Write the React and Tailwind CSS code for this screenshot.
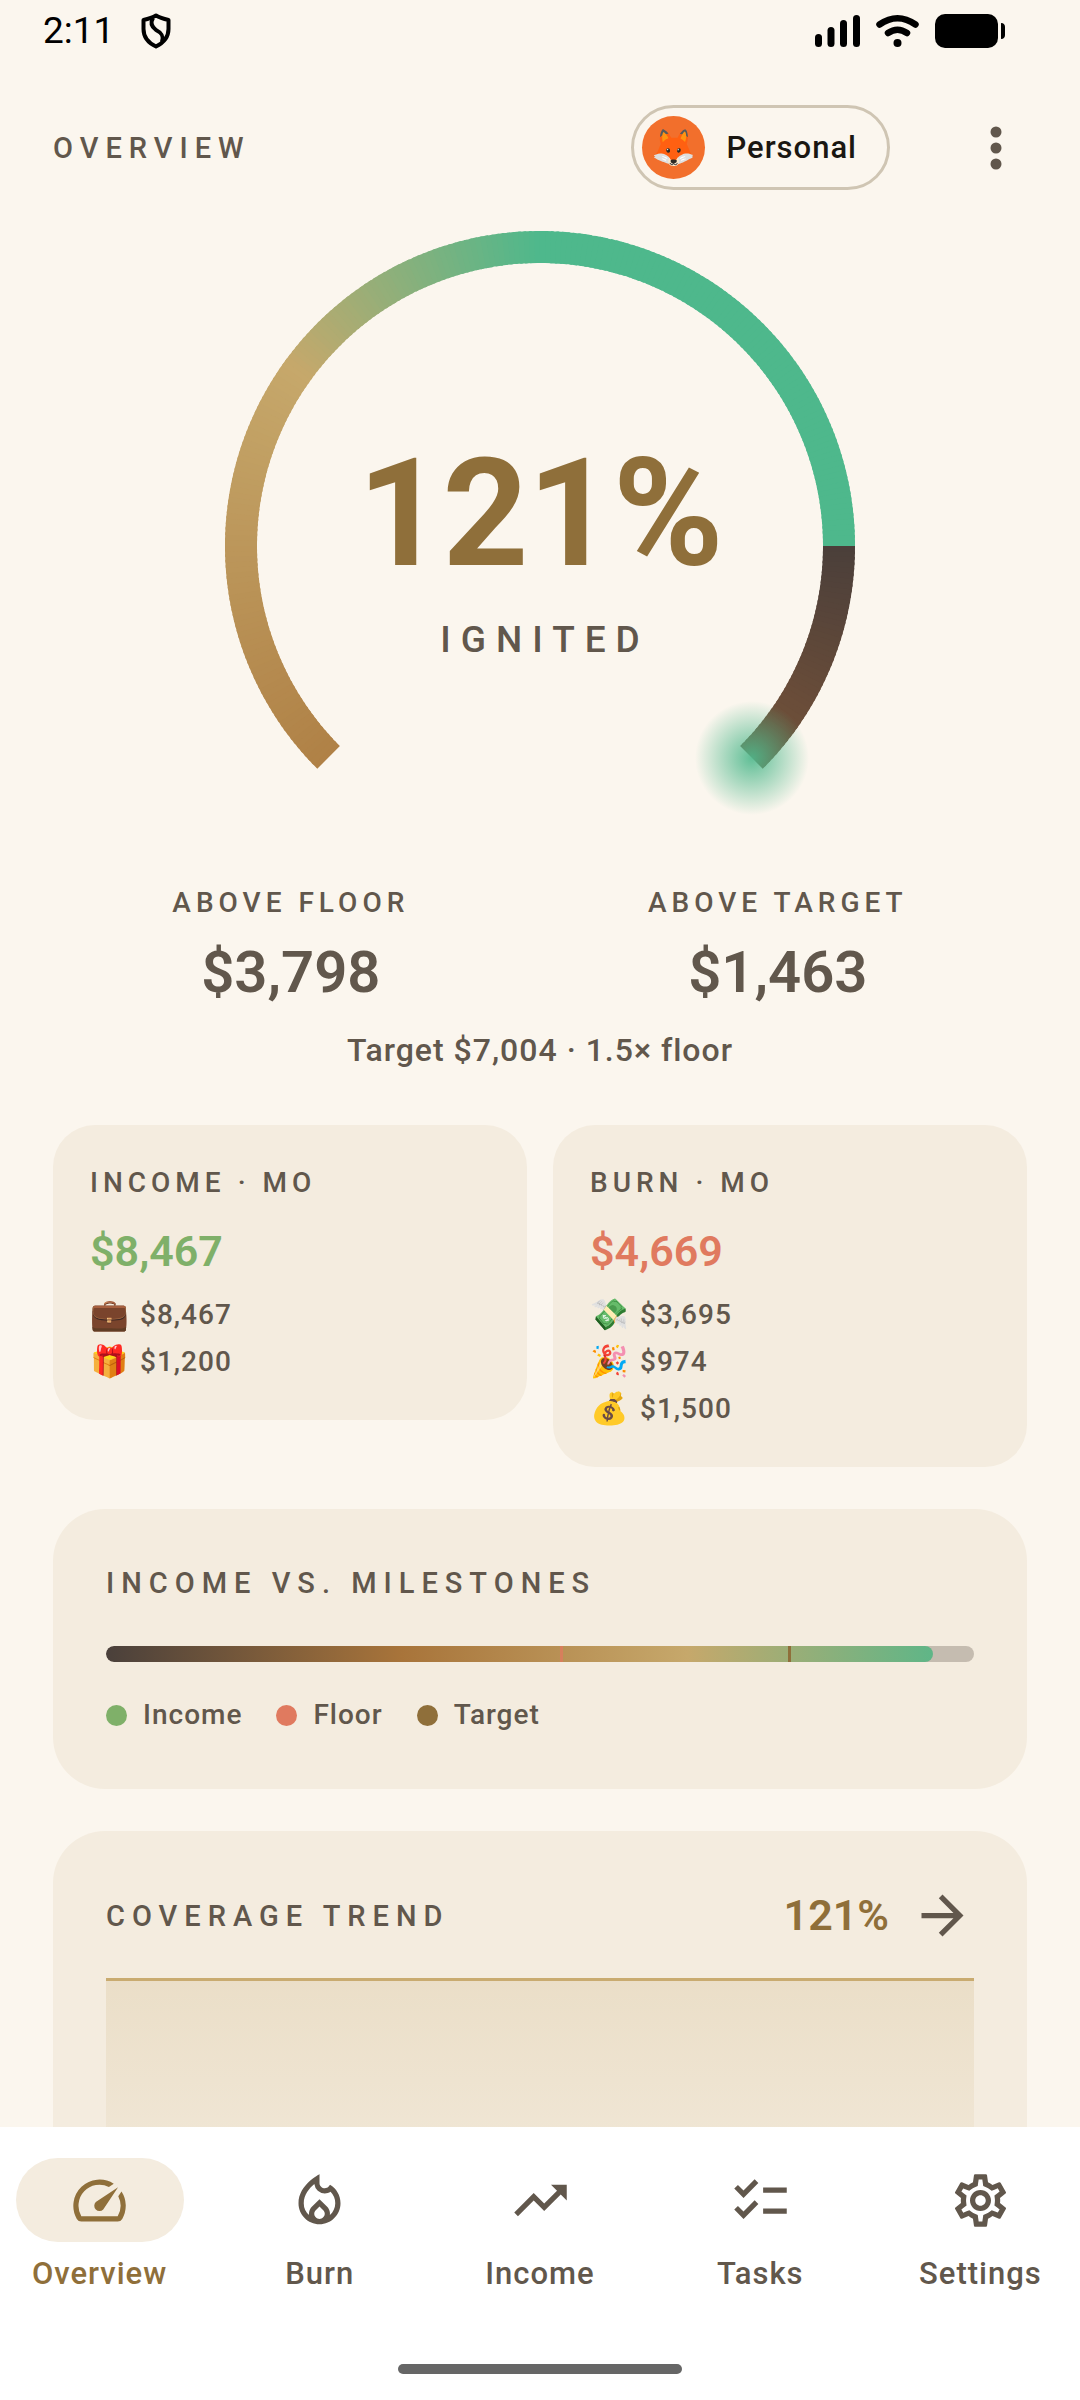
import React from "react";
import {
  MdArrowForward,
  MdChecklist,
  MdOutlineLocalFireDepartment,
  MdOutlineSettings,
  MdOutlineSpeed,
  MdTrendingUp,
} from "react-icons/md";

// --- Data -------------------------------------------------------------------
const TABS = [
  { id: "overview", label: "Overview", Icon: MdOutlineSpeed },
  { id: "burn", label: "Burn", Icon: MdOutlineLocalFireDepartment },
  { id: "income", label: "Income", Icon: MdTrendingUp },
  { id: "tasks", label: "Tasks", Icon: MdChecklist },
  { id: "settings", label: "Settings", Icon: MdOutlineSettings },
];

const income = 8467;
const floor = 4669;
const target = 7004;
const scaleMax = 8890;

const pct = v => `${(v / scaleMax) * 100}%`;

// --- Gauge ------------------------------------------------------------------
// angles run clockwise from 3 o'clock
const STOPS = [
  [0, [74, 63, 58]],
  [32, [106, 77, 57]],
  [108, [168, 116, 58]],
  [216, [198, 168, 107]],
  [270, [78, 184, 140]],
  [360, [78, 184, 140]],
];

function sweepColor(deg) {
  const a = deg % 360;
  const i = STOPS.findIndex(([d], k) => a >= d && a < STOPS[k + 1][0]);
  const [d0, c0] = STOPS[i];
  const [d1, c1] = STOPS[i + 1];
  const t = (a - d0) / (d1 - d0);
  return `rgb(${c0.map((c, k) => Math.round(c + (c1[k] - c) * t)).join(",")})`;
}

function arc(from, to, r) {
  const p = d => {
    const a = (d * Math.PI) / 180;
    return `${(315 + r * Math.cos(a)).toFixed(2)} ${(315 + r * Math.sin(a)).toFixed(2)}`;
  };
  return `M${p(from)}A${r} ${r} 0 0 1 ${p(to)}`;
}

function Gauge() {
  const slices = [];
  for (let d = 135; d < 405; d++) {
    const end = d === 359 || d === 404 ? d + 1 : d + 1.5;
    slices.push(<path key={d} d={arc(d, end, 299)} stroke={sweepColor(d + 0.5)} />);
  }
  return (
    <div className="relative mx-auto mt-[41px] size-[630px]">
      <svg viewBox="0 0 630 630" className="size-full overflow-visible" aria-hidden="true">
        <defs>
          <radialGradient id="glow">
            <stop offset="0" stopColor="#4eb88c" stopOpacity="0.9" />
            <stop offset="1" stopColor="#4eb88c" stopOpacity="0" />
          </radialGradient>
        </defs>
        <g fill="none" strokeWidth="32">{slices}</g>
        <circle cx="527" cy="527" r="57" fill="url(#glow)" />
      </svg>
      <div className="absolute inset-0 flex flex-col items-center justify-center gap-4 pt-1">
        <div className="text-[150px] leading-[168px] font-bold tracking-[-1px] text-[#8f6f3a]">121%</div>
        <div className="pl-[10px] text-[37px] leading-[52px] font-medium tracking-[10px]">IGNITED</div>
      </div>
    </div>
  );
}

// --- Bars -------------------------------------------------------------------
function StatusBar() {
  return (
    <div className="flex h-[62px] items-center pr-[75px] pl-[43px] text-black">
      <span className="text-[37px] leading-[42px]">2:11</span>
      <svg viewBox="0 0 30 36" className="ml-[27px] h-9 w-[30px]" fill="none" stroke="currentColor" strokeWidth="4" strokeLinejoin="round">
        <path d="M15 2.5C11 5 7 6 2.5 7v9c0 8 5 14 12.500 17.500C22 30 27.500 24 27.500 16V7C23 6 19 5 15 2.500Z" />
        <path d="M12 5c-3 5-1 9 3 12 6 3 8 6 6 12" />
      </svg>
      <div className="ml-auto flex items-center gap-4">
        <svg viewBox="0 0 45 34" className="h-[34px] w-[45px]" fill="currentColor">
          <rect x="0" y="20" width="7" height="13" rx="3.5" />
          <rect x="12.500" y="13" width="7" height="20" rx="3.5" />
          <rect x="25" y="6" width="7" height="27" rx="3.500" />
          <rect x="38" y="1" width="7" height="32" rx="3.500" />
        </svg>
        <svg viewBox="0 0 43 34" className="h-[34px] w-[43px]" fill="none" stroke="currentColor" strokeWidth="6.500" strokeLinecap="round">
          <path d="M3.500 10.500Q21.500-2 39.500 10.500M12 19Q21.500 12.500 31 19" />
          <circle cx="21.500" cy="29" r="4" fill="currentColor" stroke="none" />
        </svg>
        <svg viewBox="0 0 70 34" className="h-[34px] w-[70px]" fill="currentColor">
          <rect width="63" height="34" rx="10" />
          <path d="M66 9c3 0 4 2 4 4v8c0 2-1 4-4 4z" />
        </svg>
      </div>
    </div>
  );
}

function Header() {
  return (
    <header className="mt-[43px] flex h-[85px] items-center pr-[42px] pl-[53px]">
      <h1 className="mr-auto text-[29px] leading-[42px] font-medium tracking-[7px]">OVERVIEW</h1>
      <button className="flex h-[85px] items-center gap-[21px] rounded-full border-3 border-[#cfc5b3] pr-[30px] pl-2 text-[#1a1712]">
        <span className="flex size-[63px] items-center justify-center rounded-full bg-[#f26f2c] text-[36px] leading-none">🦊</span>
        <span className="text-[31px] leading-[42px] font-medium tracking-[1px]">Personal</span>
      </button>
      <button aria-label="More options" className="ml-[64px] flex h-[84px] w-[84px] items-center justify-center">
        <svg viewBox="0 0 12 44" className="h-11 w-3" fill="currentColor">
          <circle cx="6" cy="6" r="5.500" />
          <circle cx="6" cy="22" r="5.500" />
          <circle cx="6" cy="38" r="5.500" />
        </svg>
      </button>
    </header>
  );
}

function BottomNav() {
  return (
    <nav className="shrink-0 bg-white pt-[31px]">
      <div className="flex gap-[21px]">
        {TABS.map(({ id, label, Icon }) => {
          const active = id === "overview";
          return (
            <button
              key={id}
              aria-current={active ? "page" : undefined}
              className={active ? "flex flex-1 flex-col items-center gap-[11px] text-[#8f6f3a]" : "flex flex-1 flex-col items-center gap-[11px]"}
            >
              <span className={active ? "flex h-[84px] w-[168px] items-center justify-center rounded-full bg-[#f4ecdf]" : "flex h-[84px] w-[168px] items-center justify-center"}>
                <Icon className="size-[63px]" />
              </span>
              <span className="text-[31px] leading-[42px] font-medium tracking-[1px]">{label}</span>
            </button>
          );
        })}
      </div>
      <div className="mx-auto mt-[69px] mb-[26px] h-[10px] w-[284px] rounded-full bg-[#666]" />
    </nav>
  );
}

// --- Cards ------------------------------------------------------------------
function Stat({ label, value }) {
  return (
    <div className="flex flex-col items-center gap-3">
      <div className="text-[28px] leading-[42px] font-medium tracking-[5px]">{label}</div>
      <div className="text-[58px] leading-[72px] font-semibold">{value}</div>
    </div>
  );
}

function FlowCard({ label, total, totalClass, rows }) {
  return (
    <section className="rounded-[42px] bg-[#f4ecdf] p-[37px]">
      <h2 className="text-[28px] leading-[42px] font-medium tracking-[5px]">{label}</h2>
      <div className={totalClass}>{total}</div>
      <ul className="flex flex-col gap-[5px]">
        {rows.map(([icon, amount]) => (
          <li key={amount} className="flex items-center gap-[13px] text-[28px] leading-[42px] font-medium tracking-[1px]">
            <span className="w-[37px] text-[31px]">{icon}</span>
            {amount}
          </li>
        ))}
      </ul>
    </section>
  );
}

function Legend({ dotClass, label }) {
  return (
    <li className="flex items-center gap-4">
      <span className={dotClass} />
      <span className="text-[28px] leading-[42px] font-medium tracking-[1px]">{label}</span>
    </li>
  );
}

function MilestonesCard() {
  return (
    <section className="mt-[42px] rounded-[52px] bg-[#f4ecdf] p-[53px]">
      <h2 className="text-[29px] leading-[42px] font-medium tracking-[7px]">INCOME VS. MILESTONES</h2>
      <div className="relative mt-[42px] h-4 overflow-hidden rounded-full bg-[#c5bcb0]">
        <div className="h-full overflow-hidden rounded-full" style={{ width: pct(income) }}>
          <div className="h-full w-[868px] bg-[linear-gradient(90deg,#4a403b_0%,#a8743a_34%,#c6a86b_67%,#4eb88c_100%)]" />
        </div>
        <div className="absolute inset-y-0 -ml-0.5 w-[3px] bg-[#df7a5e]/80" style={{ left: pct(floor) }} />
        <div className="absolute inset-y-0 -ml-0.5 w-[3px] bg-[#8f6f3a]" style={{ left: pct(target) }} />
      </div>
      <ul className="mt-8 flex gap-[34px]">
        <Legend dotClass="size-[21px] rounded-full bg-[#7fb069]" label="Income" />
        <Legend dotClass="size-[21px] rounded-full bg-[#e07a5f]" label="Floor" />
        <Legend dotClass="size-[21px] rounded-full bg-[#8f6f3a]" label="Target" />
      </ul>
    </section>
  );
}

function TrendCard() {
  return (
    <section className="mt-[42px] rounded-[52px] bg-[#f4ecdf] p-[53px]">
      <div className="flex items-center">
        <h2 className="mr-auto text-[29px] leading-[42px] font-medium tracking-[7px]">COVERAGE TREND</h2>
        <span className="text-[43px] leading-[63px] font-semibold text-[#8f6f3a]">121%</span>
        <MdArrowForward className="ml-[22px] size-[63px]" />
      </div>
      <div className="mt-[31px] h-[260px] border-t-3 border-[#c9ab70] bg-linear-to-b from-[#c6a86b]/20 to-[#c6a86b]/2" />
    </section>
  );
}

export default function App() {
  return (
    <div className="flex h-screen flex-col bg-[#fbf6ee] font-['Roboto',sans-serif] text-[#61574c]">
      <main className="min-h-0 flex-1 overflow-hidden">
        <StatusBar />
        <Header />
        <Gauge />
        <div className="px-[53px]">
          <div className="mt-[21px] flex justify-around">
            <Stat label="ABOVE FLOOR" value="$3,798" />
            <Stat label="ABOVE TARGET" value="$1,463" />
          </div>
          <p className="mt-[21px] text-center text-[32px] leading-[42px] font-medium tracking-[1px]">Target $7,004 · 1.5× floor</p>
          <div className="mt-[54px] grid grid-cols-2 items-start gap-[26px]">
            <FlowCard
              label="INCOME · MO"
              total="$8,467"
              totalClass="mt-4 mb-[11px] text-[43px] leading-[63px] font-semibold text-[#7fb069]"
              rows={[["💼", "$8,467"], ["🎁", "$1,200"]]}
            />
            <FlowCard
              label="BURN · MO"
              total="$4,669"
              totalClass="mt-4 mb-[11px] text-[43px] leading-[63px] font-semibold text-[#e07a5f]"
              rows={[["💸", "$3,695"], ["🎉", "$974"], ["💰", "$1,500"]]}
            />
          </div>
          <MilestonesCard />
          <TrendCard />
        </div>
      </main>
      <BottomNav />
    </div>
  );
}
